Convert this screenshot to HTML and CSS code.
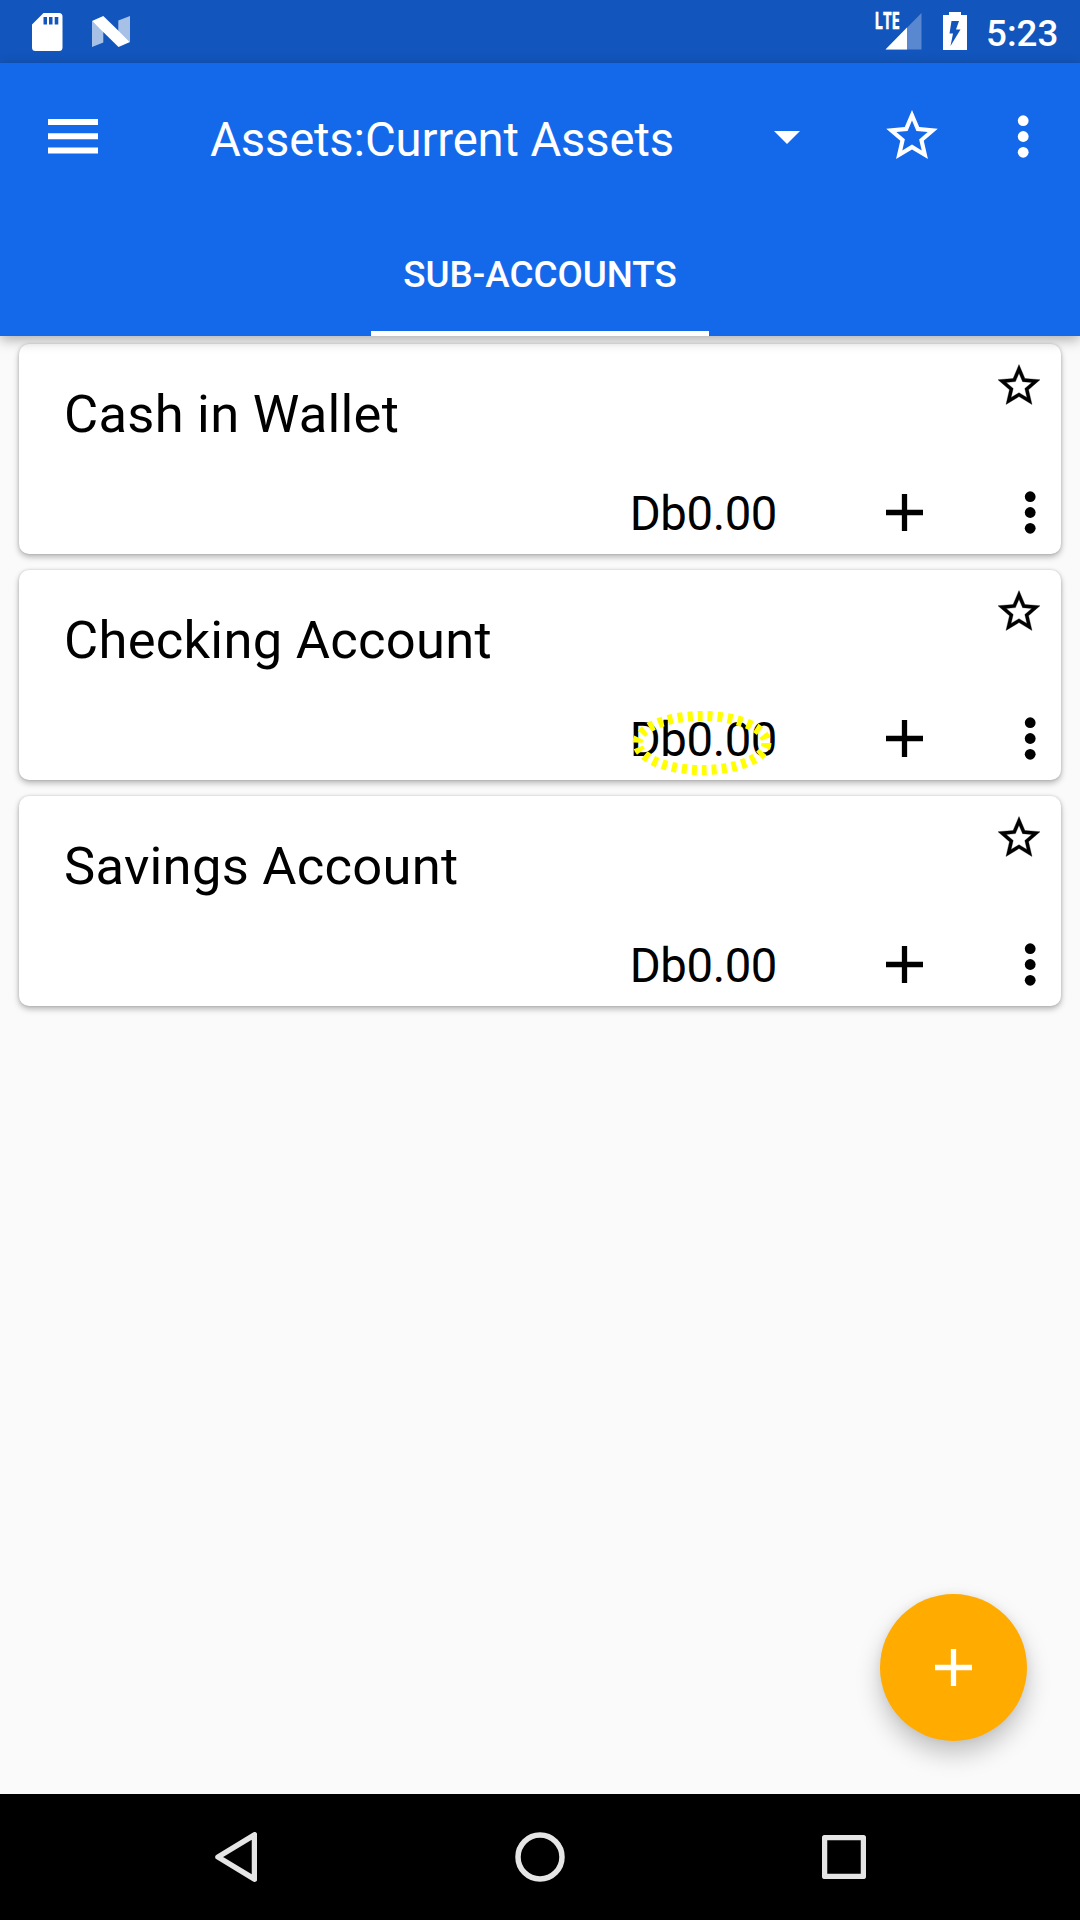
FILE: index.html
```html
<!DOCTYPE html>
<html lang="en">
<head>
<meta charset="utf-8">
<title>Assets:Current Assets</title>
<link rel="stylesheet" href="styles.css">
</head>
<body>
<svg class="defs" aria-hidden="true">
  <symbol id="star" viewBox="2 2 20 19"><path d="M22 9.24l-7.19-.62L12 2 9.19 8.63 2 9.24l5.46 4.73L5.82 21 12 17.27 18.18 21l-1.63-7.03L22 9.24zM12 15.4l-3.76 2.27 1-4.28-3.32-2.88 4.38-.38L12 6.1l1.71 4.04 4.38.38-3.32 2.88 1 4.28L12 15.4z"/></symbol>
  <symbol id="more" viewBox="0 0 12 43"><circle cx="6.2" cy="5.7" r="5.4"/><circle cx="6.2" cy="21.5" r="5.4"/><circle cx="6.2" cy="37.3" r="5.4"/></symbol>
  <symbol id="plus" viewBox="0 0 14 14"><path d="M14 8H8v6H6V8H0V6h6V0h2v6h6z"/></symbol>
</svg>
<div class="screen">
  <div class="status">
    <svg class="sd" viewBox="0 0 31 38"><path fill-rule="evenodd" d="M11.5 0H27a3.5 3.5 0 0 1 3.500 3.500V34.500a3.500 3.500 0 0 1-3.500 3.500H3.500A3.500 3.500 0 0 1 0 34.500V11.500zM11.500 4v7.500h3.500V4zM17 4v7.500h3.500V4zM22.700 4v7.500h3.600V4z"/></svg>
    <svg class="nougat" viewBox="0 0 38 31"><path opacity=".63" d="M0 5v26l11.300-4.500V15zM26.300 4.500L38 0v26L26.300 15z"/><path d="M0 5L11.300 0 38 26l-11.500 5z"/></svg>
    <svg class="signal" viewBox="0 0 46 38"><path opacity=".3" d="M45.500 0v36.500h-36z"/><path d="M31 14.500v22H9.500z"/><text x="-1.500" y="16.300" textLength="25.500" lengthAdjust="spacingAndGlyphs">LTE</text></svg>
    <svg class="battery" viewBox="0 0 24 38"><path fill-rule="evenodd" d="M6 0h12v3h6v35H0V3h6zM8.500 9L6.500 21.500H10L7.500 34 17.500 17.500H13L16 9z"/></svg>
    <span class="clock">5:23</span>
  </div>
  <header class="appbar">
    <div class="toolbar">
      <svg class="menu" viewBox="0 0 50 35"><path d="M0 0h50v6H0zM0 14.300h50v6H0zM0 28.500h50v6H0z"/></svg>
      <h1>Assets:Current Assets</h1>
      <svg class="caret" viewBox="0 0 26 13"><path d="M0 0h26L13 13z"/></svg>
      <svg class="fav"><use href="#star"/></svg>
      <svg class="more"><use href="#more"/></svg>
    </div>
    <div class="tabs"><span class="tab">SUB-ACCOUNTS</span></div>
  </header>
  <main class="list">
    <article class="card">
      <div class="top"><h2>Cash in Wallet</h2><svg class="star"><use href="#star"/></svg></div>
      <div class="bottom"><span class="balance">Db0.00</span><svg class="add"><use href="#plus"/></svg><svg class="more"><use href="#more"/></svg></div>
    </article>
    <article class="card">
      <div class="top"><h2>Checking Account</h2><svg class="star"><use href="#star"/></svg></div>
      <div class="bottom"><span class="balance">Db0.00<svg class="ring" viewBox="0 0 140 66"><ellipse cx="70" cy="33" rx="64.500" ry="27"/></svg></span><svg class="add"><use href="#plus"/></svg><svg class="more"><use href="#more"/></svg></div>
    </article>
    <article class="card">
      <div class="top"><h2>Savings Account</h2><svg class="star"><use href="#star"/></svg></div>
      <div class="bottom"><span class="balance">Db0.00</span><svg class="add"><use href="#plus"/></svg><svg class="more"><use href="#more"/></svg></div>
    </article>
  </main>
  <button class="fab" aria-label="Add account"><svg><use href="#plus"/></svg></button>
  <nav class="navbar">
    <svg class="back" viewBox="0 0 42 50"><path d="M39.500 2.800v44.400L3 25z"/></svg>
    <svg class="home" viewBox="0 0 50 50"><circle cx="25" cy="25" r="22"/></svg>
    <svg class="recent" viewBox="0 0 44 44"><rect x="2.500" y="2.500" width="39" height="39" rx="1"/></svg>
  </nav>
</div>
</body>
</html>
```
FILE: styles.css
```css
* { box-sizing: border-box; margin: 0; padding: 0; }

body {
  font-family: Roboto, "Liberation Sans", sans-serif;
  color: #000;
  background: #fafafa;
}

svg { display: block; flex: none; }
.defs { position: absolute; width: 0; height: 0; }

.screen {
  position: relative;
  display: flex;
  flex-direction: column;
  width: 1080px;
  height: 1920px;
  overflow: hidden;
}

/* Status bar */
.status {
  display: flex;
  align-items: flex-start;
  height: 63px;
  padding: 12px 22px 0 32px;
  background: #1255bc;
  color: #fff;
  fill: #fff;
}
.sd { width: 31px; height: 38px; margin-top: .5px; }
.nougat { width: 38px; height: 31px; margin: 4px 0 0 28.500px; }
.signal { width: 46px; height: 38px; margin: 1px 0 0 auto; overflow: visible; }
.signal text { font: 700 23px "Open Sans", sans-serif; stroke: #fff; stroke-width: .4; }
.battery { width: 24px; height: 38px; margin-left: 21px; }
.clock {
  margin-left: 19px;
  font-size: 36.75px;
  font-weight: 500;
  line-height: 43px;
  width: 72px;
  white-space: nowrap;
}

/* App bar */
.appbar {
  position: relative;
  z-index: 1;
  height: 273px;
  background: #1469eb;
  color: #fff;
  fill: #fff;
  box-shadow: 0 4px 12px rgba(0, 0, 0, .3);
}
.toolbar {
  display: flex;
  align-items: center;
  height: 147px;
  padding: 0 51px 0 48px;
}
.menu { width: 50px; height: 35px; margin-top: -1px; }
.toolbar h1 {
  margin: 6px 0 0 112px;
  width: 563.5px;
  font-size: 47.25px;
  font-weight: 400;
  letter-spacing: -.15px;
}
.caret { width: 26px; height: 13px; margin-top: 2px; }
.fav { width: 52px; height: 49px; margin-left: 86px; margin-top: -4px; }
.more { width: 12px; height: 43px; }
.toolbar .more { margin-left: auto; }
.tabs { display: flex; justify-content: center; height: 126px; }
.tab {
  width: 338px;
  border-bottom: 5px solid #fff;
  padding-top: 41.500px;
  font-size: 36.75px;
  line-height: 46px;
  font-weight: 500;
  text-align: center;
}

/* Account list */
.list {
  flex: 1;
  display: flex;
  flex-direction: column;
  gap: 16px;
  padding: 8px 19px;
}
.card {
  display: flex;
  flex-direction: column;
  justify-content: space-between;
  height: 210px;
  padding: 20px 21px 20.5px 45px;
  border-radius: 10px;
  background: #fff;
  box-shadow: 0 3px 6px rgba(0, 0, 0, .28), 0 0 3px rgba(0, 0, 0, .16);
}
.top, .bottom { display: flex; justify-content: space-between; }
.card h2 {
  padding-top: 19px;
  font-size: 52.5px;
  font-weight: 400;
  line-height: 62px;
  letter-spacing: .27px;
}
.star { width: 42px; height: 41px; stroke: #000; stroke-width: .15; overflow: visible; }
.bottom { align-items: center; height: 43px; justify-content: flex-end; }
.balance {
  position: relative;
  margin: 4px 108.5px 0 0;
  font-size: 47.25px;
  line-height: 54px;
  letter-spacing: -.4px;
}
.ring {
  position: absolute;
  left: 2px;
  top: -3px;
  width: 140px;
  height: 66px;
  fill: none;
  stroke: #ff0;
  stroke-width: 10;
  stroke-dasharray: 5 5;
}
.add { width: 37px; height: 37px; }
.bottom .more { margin: 0 4px 0 101.5px; }

/* Floating action button */
.fab {
  position: absolute;
  left: 880px;
  top: 1594px;
  display: grid;
  place-items: center;
  width: 147px;
  height: 147px;
  border: 0;
  border-radius: 50%;
  background: #ffab00;
  box-shadow: 0 13px 24px rgba(0, 0, 0, .22), 0 0 10px rgba(0, 0, 0, .06);
}
.fab svg { width: 37px; height: 37px; fill: #fff; }

/* System navigation */
.navbar {
  display: flex;
  align-items: center;
  justify-content: space-between;
  height: 126px;
  padding: 0 214px 0 215px;
  background: #000;
  fill: none;
  stroke: #e5e5e5;
  stroke-width: 5.5;
  stroke-linejoin: round;
}
.back { width: 42px; height: 50px; }
.home { width: 50px; height: 50px; }
.recent { width: 44px; height: 44px; }
```
